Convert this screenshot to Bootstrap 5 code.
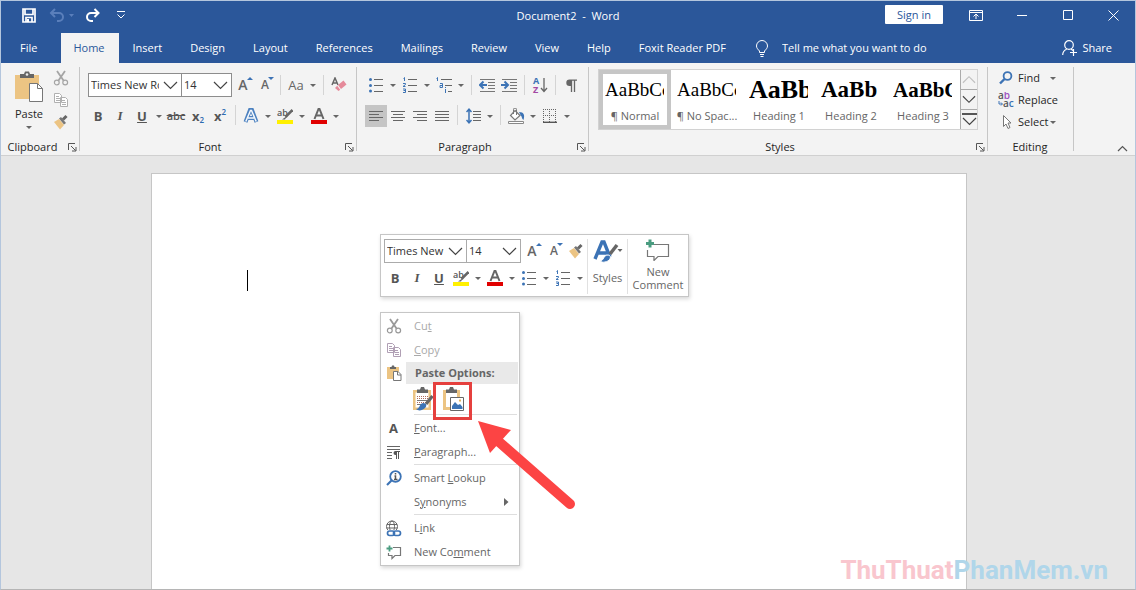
<!DOCTYPE html>
<html lang="en">
<head>
<meta charset="utf-8">
<meta name="viewport" content="width=device-width, initial-scale=1">
<title>Document2 - Word</title>
<link href="https://cdn.jsdelivr.net/npm/bootstrap@5.3.0/dist/css/bootstrap.min.css" rel="stylesheet">
<style>
:root{--word:#2b579a;--ink:#262626;--ui:"Open Sans","Noto Sans",sans-serif}
body{font:11px/16px var(--ui);color:var(--ink);background:#e6e6e6}
button,select{font:inherit;color:inherit}
svg{display:block;flex:none}
.window{min-height:100vh;border:1px solid #b4c6dd;border-bottom-color:#b5b5b5}
.tool{border:0;background:none;padding:0;display:inline-flex;align-items:center;justify-content:center;width:22px;height:22px;flex:none}
.tool.active{background:#c5c5c5}
.split{display:inline-flex;flex:none}
.drop{border:0;background:none;padding:0;width:12px;height:22px;display:inline-flex;align-items:center;justify-content:center}
.drop::after,.caret::after{content:"";border:3px solid transparent;border-top-color:#666;border-bottom:0}
.divide{width:9px;height:20px;flex:none;background:linear-gradient(#d4d4d4,#d4d4d4) center/1px 100% no-repeat}
/* title bar */
.title-bar{display:grid;grid-template-columns:1fr auto 1fr;background:var(--word);color:#fff;height:32px}
.title-bar .tool{width:32px;height:28px}
.title-bar .win{width:46px}
.title-bar .win:last-child{width:44px}
.title-bar .more-cmd{width:24px}
.quick{padding-left:12px}
.doc-name{font-size:11px;line-height:29px}
.sign{background:#fff;color:var(--word);border:0;border-radius:1px;width:58px;height:19px;line-height:17px;margin-right:10px}
/* tabs */
.tabs{background:var(--word);color:#fff;height:30px}
.tabs a{color:#fff;text-decoration:none;padding:0 14px;line-height:30px}
.tabs a.file{padding:0 24px 0 19px}
.tabs a.current{background:#f3f3f3;color:var(--word);padding:0 14px 0 12px}
.tell{border:0;background:none;color:#fff;padding:0;width:170px;margin-left:14px}
.tell::placeholder{color:#fff;opacity:1}
.share{border:0;background:none;padding:0 23px 0 0}
/* ribbon */
.ribbon{background:#f3f3f3;border-bottom:1px solid #d0d0d0;height:93px}
.group{position:relative;display:flex;flex-direction:column;margin-top:4px;height:88px;padding-top:5px;flex:none;background:linear-gradient(#c6c6c6,#c6c6c6) right top/1px 84px no-repeat}
.g-clip{width:79px;padding-top:0}
.g-font{width:277px;padding-left:7px}
.g-para{width:232px;padding-left:8px}
.g-styles{width:399px;padding:2px 10px 0 9px}
.g-edit{width:86px;padding:0 0 0 10px}
.caption{margin-top:auto;text-align:center;line-height:16px;height:16px}
.launch{position:absolute;right:1px;bottom:1px;width:14px;height:14px;border:0;background:none;padding:0;display:flex;align-items:center;justify-content:center}
.paste-big{width:52px;padding:4px 0 0 4px;border:0;background:none}
.clip-side{margin-left:-3px}
.row-a{height:26px}
.row-b{height:22px;margin-top:7px}
.combo{appearance:none;border:1px solid #ababab;border-radius:0;height:24px;padding:0 22px 0 2px;background:#fff url("data:image/svg+xml,%3Csvg xmlns='http://www.w3.org/2000/svg' width='15' height='9'%3E%3Cpath d='M1 1l6.500 6.500L14 1' fill='none' stroke='%23444' stroke-width='1.200'/%3E%3C/svg%3E") no-repeat right 3px center;overflow:hidden;line-height:16px;color:#333;text-overflow:clip;white-space:nowrap}
.combo.thick{border-color:#8d8d8d}
.combo+.combo{margin-left:-1px}
.w-face{width:94px;margin-left:1px}
.w-size{width:51px}
.m-face{width:83px}
.m-size{width:55px}
.ltr{font-size:13px;font-weight:700;color:#555;line-height:22px}
.ser{font-family:"Liberation Serif",serif}
.case{font-size:13px;color:#666}
.abc{font-size:11px;font-weight:600;text-decoration:line-through;color:#555}
.subsup{color:#2b6bb0;font-size:8px;font-weight:600}
.size-a{position:relative;font-size:14px;font-weight:600;color:#666}
.size-a.sm{font-size:12px}
.size-a::after{content:"";position:absolute;right:1px;top:3px;border:3px solid transparent;border-bottom-color:#3c73b5;border-top:0}
.size-a.sm::after{border-top:3px solid #3c73b5;border-bottom:0;right:2px}
.gallery{border:1px solid #d2d2d2;background:#fff;display:flex;height:61px}
.style-item{border:4px solid transparent;background:none;width:72px;padding:0;overflow:hidden;text-align:left;display:flex;flex-direction:column;color:#666}
.style-item.active{border-color:#c6c6c6}
.preview{font-family:"Liberation Serif",serif;color:#000;white-space:nowrap;overflow:hidden;line-height:32px;height:32px;width:59px;margin-left:2px}
.style-item small{font-size:11px;line-height:16px;margin-top:2px;width:100%;text-align:center;white-space:nowrap}
.s19{font-size:19px}.s26{font-size:26px}.s23{font-size:23px}.s21{font-size:21px}
.scroller{width:17px;display:flex;flex-direction:column}
.scroller button{flex:1;border:1px solid #ababab;border-width:0 0 1px 1px;background:#f3f3f3;padding:0;display:flex;align-items:center;justify-content:center}
.scroller button:last-child{border-bottom:0}
.edit-btn{border:0;background:none;padding:0;display:flex;align-items:center;height:22px;gap:4px}
.edit-btn .caret{margin-left:-2px}
.edit-btn .caret.far{margin-left:6px}
.fold{height:14px;margin-right:2px}
/* document */
.desk{position:relative;background:#e6e6e6;padding:17px 18px 0 0;height:calc(100vh - 157px);overflow:hidden}
.sheet{width:816px;max-width:100%;min-height:100%;background:#fff;border:1px solid #c6c6c6;border-bottom:0;padding:96px 95px;position:relative}
.cursor{width:1px;height:21px;background:#000}
.float{position:absolute;background:#fff;border:1px solid #c6c6c6;box-shadow:1px 2px 4px rgba(0,0,0,.16)}
.mini{left:228px;top:60px;width:309px;height:63px;display:flex;padding:4px 0 0 3px;color:#555}
.mini-col{border-left:1px solid #e1e1e1;display:flex;flex-direction:column;align-items:center;height:55px}
.m-styles{width:40px}
.mini-big{border:0;background:none;padding:0;display:flex;flex-direction:column;align-items:center;line-height:13px;color:#666}
.context{left:228px;top:138px;width:140px;padding:1px 0;color:#666}
.context .item{border:0;background:none;width:100%;height:24px;padding:0;display:flex;align-items:center;text-align:left}
.context .item:disabled{color:#a9a9a9}
.ico{width:33px;flex:none;display:flex;justify-content:center;padding-right:8px}
.more{margin-right:10px}
.head{height:22px;display:flex;align-items:center}
.head b{background:#e9e9e9;flex:1;margin:0 1px 0 -8px;padding-left:9px;line-height:22px;font-weight:700}
.rule{height:2px;border-top:1px solid #dedede;margin:0 2px 0 33px}
.paste{height:30px;padding-left:30px;display:flex;gap:6px}
.paste button{position:relative;width:24px;height:30px}
.marked::after{content:"";position:absolute;left:-8px;top:-2px;width:39px;height:38px;border:3px solid #e5403e}
.pointer{position:absolute;left:326px;top:247px}
.brand{position:absolute;right:27px;bottom:1px;font:bold 26px/36px Roboto,"Liberation Sans",sans-serif;color:#f9c6ce;white-space:nowrap}
.brand span{color:#b0d6ea}
</style>
<script src="https://cdn.jsdelivr.net/npm/bootstrap@5.3.0/dist/js/bootstrap.bundle.min.js"></script>
</head>
<body>
<svg width="0" height="0" class="position-absolute" aria-hidden="true">
<symbol id="launch" viewBox="0 0 9 9"><path d="M.5 7V.5H7M3 3l4.500 4.500M8 4v4H4" fill="none" stroke="#555"/></symbol>
<symbol id="scissors" viewBox="0 0 16 16"><path d="M4 1l6.500 9.500M12 1L5.500 10.500" fill="none" stroke="currentColor" stroke-width="1.800"/><circle cx="3.800" cy="12.500" r="2.400" fill="none" stroke="currentColor" stroke-width="1.200"/><circle cx="12.200" cy="12.500" r="2.400" fill="none" stroke="currentColor" stroke-width="1.200"/></symbol>
<symbol id="copy" viewBox="0 0 16 16"><path d="M1.500 1.500h5l2 2v7h-7z M7.500 5.500h5l2 2v7h-7z" fill="#fff" stroke="currentColor"/><path d="M3 4.500h3M3 6.500h4M3 8.500h4M9 8.500h3M9 10.500h4M9 12.500h4" stroke="currentColor"/></symbol>
<symbol id="brush" viewBox="0 0 16 16"><path d="M1 8l5-3 5 6-4 4.500z" fill="#ecc483"/><path d="M6 4.500l2-1.500 5 6-2 1.500z" fill="#777"/><path d="M10 5.500L13.500 2" stroke="#666" stroke-width="3"/></symbol>
<symbol id="bullets" viewBox="0 0 16 16"><path d="M6 2.500h9M6 8.500h9M6 14.500h9" stroke="#666"/><g fill="#3c73b5"><circle cx="2.500" cy="2.500" r="1.500"/><circle cx="2.500" cy="8.500" r="1.500"/><circle cx="2.500" cy="14" r="1.500"/></g></symbol>
<symbol id="numbers" viewBox="0 0 16 16"><path d="M6 2.500h9M6 8.500h9M6 14.500h9" stroke="#666"/><path d="M1.500 1.500l1-1V4M1 6.500h2.500v1L1 9.500h2.500M1 12h2.500v3.500H1M1.500 13.500h2" stroke="#3c73b5" fill="none"/></symbol>
<symbol id="fontcolor" viewBox="0 0 16 16"><path d="M3.500 11L7.500 1h1l4 10M5.500 7.500h5" fill="none" stroke="#666" stroke-width="2"/><path d="M0 12h16v4H0z" fill="#e00000"/></symbol>
<symbol id="marker" viewBox="0 0 16 16"><path d="M0 12h16v4H0z" fill="#fff000"/><text x="0" y="8" font-size="9" font-weight="600" fill="#555">ab</text><path d="M15.500 2L8.500 9" stroke="#666" stroke-width="2.500"/><path d="M10 8l-2 3.500L5 11.500z" fill="#666"/></symbol>
<symbol id="chev" viewBox="0 0 15 9"><path d="M1 1l6.500 6.500L14 1" fill="none" stroke="currentColor" stroke-width="1.200"/></symbol>
</svg>
<div class="window d-flex flex-column">
<header>
<div class="title-bar">
 <div class="quick d-flex">
  <button class="tool" aria-label="Save"><svg width="14" height="15" viewBox="0 0 14 15"><path d="M1 1h12v13H1zM3 1v5.500h8V1M4 14V9.500h6V14" fill="none" stroke="#fff" stroke-width="1.700"/><path d="M5 11h2v3H5z" fill="#fff"/></svg></button>
  <button class="tool" aria-label="Undo"><svg width="26" height="14" viewBox="0 0 26 14"><path d="M7 1L3 5l4 4M3.500 5H11a3.500 3.500 0 010 8H9" fill="none" stroke="#5a7fbb" stroke-width="2"/><path d="M21 6h5l-2.500 3z" fill="#5a7fbb"/></svg></button>
  <button class="tool" aria-label="Redo"><svg width="16" height="14" viewBox="0 0 16 14"><path d="M9.500 1l4 4-4 4M13 5H6a3.500 3.500 0 000 8h2" fill="none" stroke="#fff" stroke-width="2"/></svg></button>
  <button class="tool more-cmd" aria-label="Customize Quick Access Toolbar"><svg width="8" height="8" viewBox="0 0 8 8"><path d="M0 .5h8M.5 3.500L4 7l3.500-3.500" fill="none" stroke="#fff"/></svg></button>
 </div>
 <h1 class="doc-name m-0 fw-normal">Document2&nbsp; -&nbsp; Word</h1>
 <div class="d-flex justify-content-end">
  <button class="sign mt-1">Sign in</button>
  <button class="tool win" aria-label="Ribbon Display Options"><svg width="14" height="11" viewBox="0 0 14 11"><path d="M.5.5h13v10H.5zM.5 2.500h13M7 9V4.500M4.500 6.500L7 4l2.500 2.500" fill="none" stroke="#fff"/></svg></button>
  <button class="tool win" aria-label="Minimize"><svg width="10" height="3"><path d="M0 1.500h10" stroke="#fff"/></svg></button>
  <button class="tool win" aria-label="Maximize"><svg width="10" height="10"><path d="M.5.5h9v9h-9z" fill="none" stroke="#fff"/></svg></button>
  <button class="tool win" aria-label="Close"><svg width="11" height="11"><path d="M.5.5l10 10M10.500.5l-10 10" stroke="#fff"/></svg></button>
 </div>
</div>
<nav class="tabs d-flex align-items-stretch">
 <a class="file" href="#">File</a><a class="current" href="#">Home</a><a href="#">Insert</a><a href="#">Design</a><a href="#">Layout</a><a href="#">References</a><a href="#">Mailings</a><a href="#">Review</a><a href="#">View</a><a href="#">Help</a><a href="#">Foxit Reader PDF</a>
 <label class="d-flex align-items-center ms-3"><svg width="12" height="17" viewBox="0 0 12 17"><path d="M3.500 12.500V11C2 9.500.5 8 .5 6a5.500 5.500 0 0111 0c0 2-1.500 3.500-3 5v1.500zM4 14.500h4M4.500 16.500h3" fill="none" stroke="#fff"/></svg><input class="tell" aria-label="Tell me" placeholder="Tell me what you want to do"></label>
 <button class="share ms-auto d-flex align-items-center gap-1 text-white"><svg width="16" height="16" viewBox="0 0 16 16"><circle cx="7" cy="5" r="4.300" fill="none" stroke="#fff" stroke-width="1.200"/><path d="M.7 15c0-3 1.800-5 4-5.800M9 9l2 1.500M8 12.500h7M11.500 9v7" fill="none" stroke="#fff" stroke-width="1.200"/></svg>Share</button>
</nav>
</header>
<section class="ribbon d-flex">
 <div class="group g-clip">
  <div class="d-flex">
   <button class="paste-big d-flex flex-column align-items-center"><svg width="30" height="31" viewBox="0 0 30 31"><path d="M1 4h24v24H1z" fill="#ecc483"/><path d="M6 7V3h4l1-2.500h4L16 3h4v4z" fill="#666"/><circle cx="13" cy="3.500" r="1.300" fill="#eee"/><path d="M15.500 12.500h8l5 5v13h-13z" fill="#fff" stroke="#777"/><path d="M23.500 12.500v5h5" fill="none" stroke="#777"/></svg><span class="mt-1">Paste</span><span class="caret d-flex mt-1"></span></button>
   <div class="d-flex flex-column clip-side">
    <button class="tool" aria-label="Cut" disabled><svg width="16" height="16" color="#a5a5a5"><use href="#scissors"/></svg></button>
    <button class="tool" aria-label="Copy" disabled><svg width="16" height="16" color="#b0b0b0"><use href="#copy"/></svg></button>
    <button class="tool" aria-label="Format Painter"><svg width="16" height="16"><use href="#brush"/></svg></button>
   </div>
  </div>
  <div class="caption pe-3">Clipboard</div><button class="launch" aria-label="Clipboard settings"><svg width="9" height="9"><use href="#launch"/></svg></button>
 </div>
 <div class="group g-font">
  <div class="row-a d-flex align-items-center">
   <select class="combo thick w-face" aria-label="Font"><option>Times New Roman</option></select><select class="combo thick w-size" aria-label="Font size"><option>14</option></select>
   <button class="tool size-a" aria-label="Grow font">A</button><button class="tool size-a sm" aria-label="Shrink font">A</button><span class="divide"></span>
   <span class="split"><button class="tool case">Aa</button><button class="drop" aria-label="Case options"></button></span><span class="divide"></span>
   <button class="tool" aria-label="Clear formatting"><svg width="16" height="16" viewBox="0 0 16 16"><path d="M1 8L4 1l3 7M2.500 6h3" fill="none" stroke="#666" stroke-width="1.500"/><path d="M7 8L12.500 3.500l3 4L10 12z" fill="#e58a9a"/><path d="M6.200 8.700l3 4L7.500 14 4 11z" fill="#e58a9a"/></svg></button>
  </div>
  <div class="row-b d-flex">
   <button class="tool ltr">B</button><button class="tool ltr ser fst-italic">I</button><span class="split"><button class="tool ltr text-decoration-underline">U</button><button class="drop" aria-label="Underline options"></button></span><button class="tool abc">abc</button><button class="tool ltr">x<span class="subsup pt-2">2</span></button><button class="tool ltr">x<span class="subsup pb-2">2</span></button><span class="divide"></span>
   <span class="split"><button class="tool" aria-label="Text effects"><svg width="16" height="16" viewBox="0 0 16 16"><path d="M2.500 14L7 2h2l4.500 12M5 10h6" fill="none" stroke="#4d82c0" stroke-width="4"/><path d="M2.800 13.500L7.500 2.500h1l4.700 11M5 10h6" fill="none" stroke="#f5f9fd" stroke-width="1.500"/></svg></button><button class="drop" aria-label="Text effects options"></button></span>
   <span class="split"><button class="tool" aria-label="Highlight"><svg width="16" height="16"><use href="#marker"/></svg></button><button class="drop" aria-label="Highlight colours"></button></span>
   <span class="split"><button class="tool" aria-label="Font color"><svg width="16" height="16"><use href="#fontcolor"/></svg></button><button class="drop" aria-label="Font colours"></button></span>
  </div>
  <div class="caption pe-4">Font</div><button class="launch" aria-label="Font settings"><svg width="9" height="9"><use href="#launch"/></svg></button>
 </div>
 <div class="group g-para">
  <div class="row-a d-flex align-items-center">
   <span class="split"><button class="tool" aria-label="Bullets"><svg width="16" height="16"><use href="#bullets"/></svg></button><button class="drop" aria-label="Bullet styles"></button></span>
   <span class="split"><button class="tool" aria-label="Numbering"><svg width="16" height="16"><use href="#numbers"/></svg></button><button class="drop" aria-label="Number styles"></button></span>
   <span class="split"><button class="tool" aria-label="Multilevel list"><svg width="17" height="16" viewBox="0 0 17 16"><path d="M5 2.500h11M9 8.500h7M12 14.500h4" stroke="#666"/><path d="M.5 1.500l1-1V4M4 6.500h2.500v4H4v-2h2M9.500 12v4M9.500 10v1" stroke="#3c73b5" fill="none"/></svg></button><button class="drop" aria-label="Multilevel styles"></button></span><span class="divide"></span>
   <button class="tool" aria-label="Decrease indent"><svg width="17" height="14" viewBox="0 0 17 14"><path d="M1 1.500h15M9 4.500h7M9 7.500h7M9 10.500h7M1 13.500h15" stroke="#777"/><path d="M1 7h7M4.500 3.500L1 7l3.500 3.500" fill="none" stroke="#3c73b5" stroke-width="2"/></svg></button><button class="tool" aria-label="Increase indent"><svg width="17" height="14" viewBox="0 0 17 14"><path d="M1 1.500h15M9 4.500h7M9 7.500h7M9 10.500h7M1 13.500h15" stroke="#777"/><path d="M0 7h7M3.500 3.500L7 7l-3.500 3.500" fill="none" stroke="#3c73b5" stroke-width="2"/></svg></button><span class="divide"></span>
   <button class="tool" aria-label="Sort"><svg width="16" height="17" viewBox="0 0 16 17"><text x="1" y="7" font-size="9" font-weight="700" fill="#3c73b5">A</text><text x="1" y="16" font-size="9" font-weight="700" fill="#a349a4">Z</text><path d="M12 1v13M9 11l3 3.500 3-3.500" fill="none" stroke="#666" stroke-width="1.300"/></svg></button><span class="divide"></span>
   <button class="tool" aria-label="Show paragraph marks"><svg width="12" height="13" viewBox="0 0 12 13"><path d="M6 7H4.500a3.200 3.200 0 010-6.400H12v1.200H6z" fill="#666"/><path d="M6.500 1v12M9.500 1v12" stroke="#666" stroke-width="1.300"/></svg></button>
  </div>
  <div class="row-b d-flex">
   <button class="tool active" aria-label="Align left"><svg width="14" height="12"><path d="M0 1.500h14M0 4.500h10M0 7.500h14M0 10.500h10" stroke="#666"/></svg></button><button class="tool" aria-label="Center"><svg width="14" height="12"><path d="M0 1.500h14M2 4.500h10M0 7.500h14M2 10.500h10" stroke="#666"/></svg></button><button class="tool" aria-label="Align right"><svg width="14" height="12"><path d="M0 1.500h14M4 4.500h10M0 7.500h14M4 10.500h10" stroke="#666"/></svg></button><button class="tool" aria-label="Justify"><svg width="14" height="12"><path d="M0 1.500h14M0 4.500h14M0 7.500h14M0 10.500h14" stroke="#666"/></svg></button><span class="divide"></span>
   <span class="split"><button class="tool" aria-label="Line spacing"><svg width="15" height="16" viewBox="0 0 15 16"><path d="M7 3.500h8M7 6.500h8M7 9.500h8M7 12.500h8" stroke="#666"/><path d="M3 1v14M.5 4L3 1.200 5.500 4M.5 12L3 14.800 5.500 12" fill="none" stroke="#3c73b5" stroke-width="1.500"/></svg></button><button class="drop" aria-label="Spacing options"></button></span><span class="divide"></span>
   <span class="split"><button class="tool" aria-label="Shading"><svg width="17" height="16" viewBox="0 0 17 16"><path d="M7 2.500l5 5-5 4.500-4.500-4.500z" fill="#fff" stroke="#777" stroke-width="1.200"/><path d="M5.500 6V1.500a1.500 1.500 0 013 0V7" fill="none" stroke="#777"/><path d="M11 4c5 0 6 3 4.500 8-2-1-1-3-3-5z" fill="#3c73b5"/><path d="M.5 13.500h15v2H.5z" fill="#fff" stroke="#888"/></svg></button><button class="drop" aria-label="Shading colours"></button></span>
   <span class="split"><button class="tool" aria-label="Borders"><svg width="14" height="14" viewBox="0 0 14 14"><path d="M.5 0v13M6.500 0v13M12.500 0v13M0 .5h13M0 6.500h13" stroke="#666" stroke-dasharray="1 1"/><path d="M0 13.300h14" stroke="#555" stroke-width="1.400"/></svg></button><button class="drop" aria-label="Border styles"></button></span>
  </div>
  <div class="caption pe-4">Paragraph</div><button class="launch" aria-label="Paragraph settings"><svg width="9" height="9"><use href="#launch"/></svg></button>
 </div>
 <div class="group g-styles">
  <div class="gallery">
   <button class="style-item active"><span class="preview s19">AaBbCcDd</span><small>¶ Normal</small></button>
   <button class="style-item"><span class="preview s19">AaBbCcDd</span><small>¶ No Spac...</small></button>
   <button class="style-item"><span class="preview s26 fw-bold">AaBbCc</span><small>Heading 1</small></button>
   <button class="style-item"><span class="preview s23 fw-bold">AaBb</span><small>Heading 2</small></button>
   <button class="style-item"><span class="preview s21 fw-bold">AaBbCc</span><small>Heading 3</small></button>
   <div class="scroller ms-auto"><button aria-label="Scroll up" disabled><svg width="14" height="9" viewBox="0 0 15 9"><path d="M1 8l6.500-6.500L14 8" fill="none" stroke="#c0c0c0" stroke-width="1.200"/></svg></button><button aria-label="Scroll down"><svg width="14" height="9" color="#444"><use href="#chev"/></svg></button><button aria-label="More styles"><svg width="15" height="14" viewBox="0 0 15 14"><path d="M0 1h15" stroke="#222" stroke-width="1.500"/><path d="M1 5l6.500 6.500L14 5" fill="none" stroke="#444" stroke-width="1.200"/></svg></button></div>
  </div>
  <div class="caption pe-3">Styles</div><button class="launch" aria-label="Style settings"><svg width="9" height="9"><use href="#launch"/></svg></button>
 </div>
 <div class="group g-edit">
  <button class="edit-btn"><svg width="16" height="14" viewBox="0 0 16 14"><circle cx="9.500" cy="5" r="3.900" fill="none" stroke="#3c73b5" stroke-width="1.800"/><path d="M6.500 8L2 12.500" stroke="#3c73b5" stroke-width="2.400"/></svg>Find<span class="caret far d-flex"></span></button>
  <button class="edit-btn"><svg width="16" height="16" viewBox="0 0 16 16"><text x="0" y="7" font-size="10" font-weight="600" fill="#555">a<tspan fill="#9b4fc0">b</tspan></text><text x="5" y="15" font-size="10" font-weight="600" fill="#555">a<tspan fill="#3c73b5">c</tspan></text><path d="M1 9v3h3M3 10.500l1.500 1.500L3 13.500" fill="none" stroke="#3c73b5"/></svg>Replace</button>
  <button class="edit-btn"><svg width="16" height="16" viewBox="0 0 16 16"><path d="M5.500 1.500v11l2.500-2.500 2 4.500 2-1-2-4.500h3z" fill="#fff" stroke="#777"/></svg>Select<span class="caret d-flex"></span></button>
  <div class="caption pe-2 me-1">Editing</div>
 </div>
 <button class="tool ms-auto mt-auto fold" aria-label="Collapse the ribbon"><svg width="11" height="7"><path d="M1 6l4.500-4.500L10 6" fill="none" stroke="#555" stroke-width="1.200"/></svg></button>
</section>
<main class="desk">
 <article class="sheet mx-auto">
  <div class="cursor"></div>
  <div class="float mini">
   <div class="mini-main">
    <div class="d-flex align-items-center">
     <select class="combo m-face" aria-label="Font"><option>Times New Roman</option></select><select class="combo m-size" aria-label="Font size"><option>14</option></select>
     <button class="tool size-a" aria-label="Grow font">A</button><button class="tool size-a sm" aria-label="Shrink font">A</button><button class="tool" aria-label="Format Painter"><svg width="16" height="16"><use href="#brush"/></svg></button>
    </div>
    <div class="d-flex mt-1">
     <button class="tool ltr">B</button><button class="tool ltr ser fst-italic">I</button><button class="tool ltr text-decoration-underline">U</button>
     <span class="split"><button class="tool" aria-label="Highlight"><svg width="16" height="16"><use href="#marker"/></svg></button><button class="drop" aria-label="Highlight colours"></button></span>
     <span class="split"><button class="tool" aria-label="Font color"><svg width="16" height="16"><use href="#fontcolor"/></svg></button><button class="drop" aria-label="Font colours"></button></span>
     <span class="split"><button class="tool" aria-label="Bullets"><svg width="16" height="16"><use href="#bullets"/></svg></button><button class="drop" aria-label="Bullet styles"></button></span>
     <span class="split"><button class="tool" aria-label="Numbering"><svg width="16" height="16"><use href="#numbers"/></svg></button><button class="drop" aria-label="Number styles"></button></span>
    </div>
   </div>
   <div class="mini-col m-styles"><button class="mini-big"><svg width="30" height="24" viewBox="0 0 30 24"><path d="M2 20L9 3h2l6 15M5 14h10" fill="none" stroke="#3c73b5" stroke-width="3.400"/><path d="M24 6l-7 9" stroke="#666" stroke-width="3.500"/><path d="M7 22c4 0 3-6 8-6 4 0 3 6-3 7-2 .5-4 0-5-1z" fill="#3c73b5" stroke="#fff"/><path d="M24.500 10h5L27 13z" fill="#666"/></svg><span class="mt-1 pt-1">Styles</span></button></div>
   <div class="mini-col flex-fill"><button class="mini-big"><svg width="26" height="22" viewBox="0 0 26 22"><path d="M9 5.500h14.500v12H13l-4 4v-4H2.500V11" fill="none" stroke="#777" stroke-width="1.200"/><path d="M5 .5v8M1 4.500h8" stroke="#4a9c80" stroke-width="3"/></svg><span class="mt-1">New<br>Comment</span></button></div>
  </div>
  <div class="float context">
   <button class="item" disabled><span class="ico"><svg width="16" height="16" color="#999"><use href="#scissors"/></svg></span><span>Cu<u>t</u></span></button>
   <button class="item" disabled><span class="ico"><svg width="16" height="16" color="#b09fb4"><use href="#copy"/></svg></span><span><u>C</u>opy</span></button>
   <div class="head"><span class="ico"><svg width="16" height="16" viewBox="0 0 16 16"><path d="M1 2h12v12H1z" fill="#ecc483"/><path d="M4 4V2h1.500L6 .5h2L8.500 2H10v2z" fill="#666"/><path d="M7.500 6.500H12l3 3v6H7.500z" fill="#fff" stroke="#777"/><path d="M11.500 6.500v3.500H15" fill="none" stroke="#777"/></svg></span><b>Paste Options:</b></div>
   <div class="paste"><button class="tool" aria-label="Keep source formatting"><svg width="22" height="24" viewBox="0 0 22 24"><path d="M1 3h18v20H1z" fill="#ecc483"/><path d="M3.500 5.500h13v15h-13z" fill="#fff"/><path d="M5 6V2.500h3L9 0h3l1 2.500h3V6z" fill="#666"/><path d="M5 9.500h11M5 11.500h11M5 15.500h9" stroke="#b06a5c" stroke-dasharray="1 1"/><path d="M5 13.500h11M5 17.500h6" stroke="#777"/><path d="M20.500 9L14 17" stroke="#666" stroke-width="3.200"/><path d="M4 22c4 0 3-5 7-6 4 0 4 3 2 5-3 3-7 3-9 1z" fill="#3c73b5"/></svg></button><button class="tool marked" aria-label="Picture"><svg width="22" height="24" viewBox="0 0 22 24"><path d="M1 3h17v20H1z" fill="#ecc483"/><path d="M4 6h11v14H4z" fill="#fff"/><path d="M4 6V2.500h3L8 0h3l1 2.500h3V6z" fill="#666"/><path d="M8.500 10.500h13v13h-13z" fill="#fff" stroke="#666"/><path d="M10 22v-3l3-4 3 3 2-1 2.500 3v2z" fill="#3c73b5"/><path d="M17 12.500h2v2h-2z" fill="#e5b35f"/></svg></button></div>
   <div class="rule"></div>
   <button class="item"><span class="ico ltr">A</span><span><u>F</u>ont...</span></button>
   <button class="item"><span class="ico"><svg width="15" height="13" viewBox="0 0 15 13"><path d="M1 .5h13M1 3.500h13M1 6.500h5M1 9.500h5M1 12.500h5" stroke="#666"/><path d="M9.500 9a2 2 0 010-4H14v1h-3v3z" fill="#555"/><path d="M10.500 5v8M12.500 5v8" stroke="#555"/></svg></span><span><u>P</u>aragraph...</span></button>
   <div class="rule"></div>
   <button class="item"><span class="ico"><svg width="16" height="16" viewBox="0 0 16 16"><circle cx="9.500" cy="6.500" r="5.300" fill="#fff" stroke="#3c73b5" stroke-width="1.800"/><path d="M5.500 10.500L1 15" stroke="#3c73b5" stroke-width="2.200"/><path d="M9.500 3v1.500M8.500 6h1v3.500M8 9.500h3.500" fill="none" stroke="#555" stroke-width="1.500"/></svg></span><span>Smart <u>L</u>ookup</span></button>
   <button class="item"><span class="ico"></span><span>S<u>y</u>nonyms</span><svg class="ms-auto more" width="5" height="8"><path d="M0 0l4.500 4L0 8z" fill="#666"/></svg></button>
   <div class="rule"></div>
   <button class="item"><span class="ico"><svg width="17" height="17" viewBox="0 0 17 17"><circle cx="7" cy="6.500" r="5.500" fill="none" stroke="#666"/><ellipse cx="7" cy="6.500" rx="2.500" ry="5.500" fill="none" stroke="#666"/><path d="M2 4.500h10M1.500 8h11" stroke="#666"/><path d="M2.500 10h12v6.500h-12z" fill="#fff"/><rect x="2.500" y="11" width="7" height="4.500" rx="2.200" fill="none" stroke="#3c73b5" stroke-width="1.700"/><rect x="8.500" y="11" width="7" height="4.500" rx="2.200" fill="none" stroke="#3c73b5" stroke-width="1.700"/></svg></span><span>L<u>i</u>nk</span></button>
   <button class="item"><span class="ico"><svg width="16" height="15" viewBox="0 0 16 15"><path d="M7 2.500h7.500v8H9l-3 3v-3H2.500V8" fill="none" stroke="#777" stroke-width="1.200"/><path d="M3.500.5v6M.5 3.500h6" stroke="#4a9c80" stroke-width="1.800"/></svg></span><span>New Co<u>m</u>ment</span></button>
  </div>
  <svg class="pointer" width="98" height="90" viewBox="0 0 98 90"><path d="M20 20L92 83" stroke="#fc4444" stroke-width="10" stroke-linecap="round"/><path d="M0 0L33 9 12 32z" fill="#fc4444"/></svg>
 </article>
 <div class="brand">ThuThuat<span>PhanMem.vn</span></div>
</main>
</div>
</body>
</html>
